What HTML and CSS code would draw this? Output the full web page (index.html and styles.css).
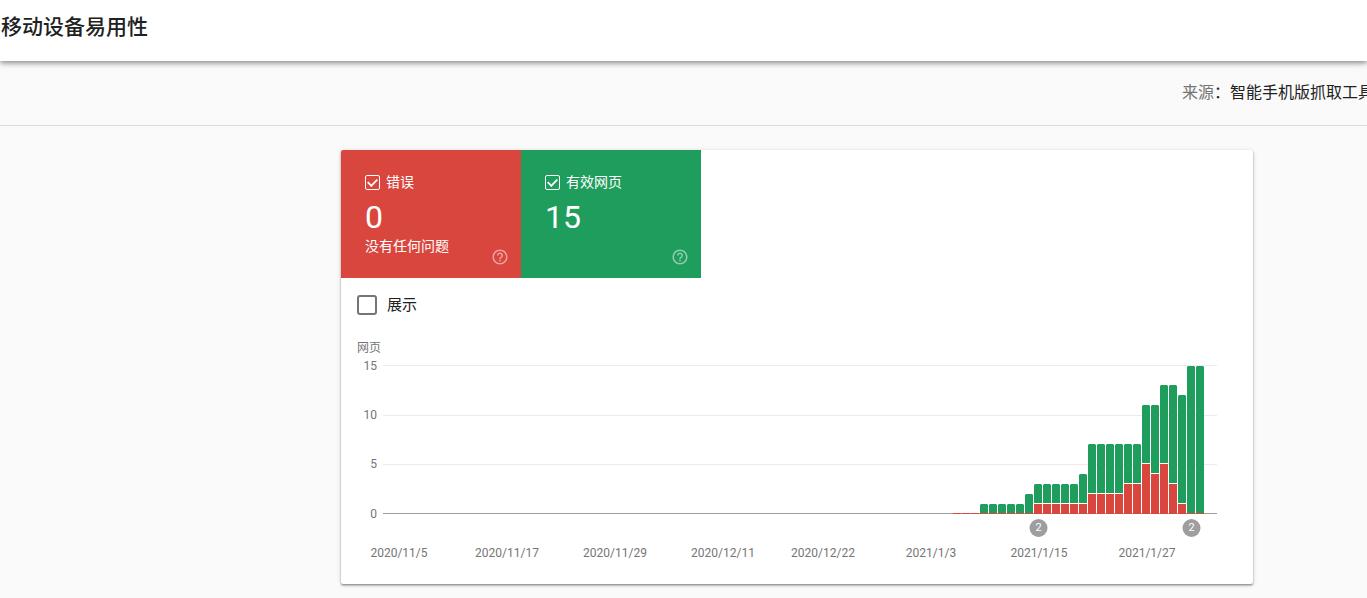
FILE: index.html
```html
<!DOCTYPE html>
<html lang="zh-CN">
<head>
<meta charset="utf-8">
<meta name="viewport" content="width=device-width, initial-scale=1">
<title>移动设备易用性</title>
<link rel="stylesheet" href="styles.css">
</head>
<body>
<header class="header">
  <h1 class="title">移动设备易用性</h1>
</header>
<div class="source-bar">
  <p class="source"><span class="source-label">来源</span>：智能手机版抓取工具</p>
</div>
<main class="content">
  <section class="card">
    <div class="tiles">
      <div class="tile tile-error">
        <label class="tile-label"><input class="tile-check" type="checkbox" checked>错误</label>
        <div class="tile-value">0</div>
        <div class="tile-note">没有任何问题</div>
        <button class="help" type="button" aria-label="帮助">
          <svg class="help-icon" viewBox="0 0 24 24" aria-hidden="true"><path d="M11 18h2v-2h-2v2zm1-16C6.480 2 2 6.480 2 12s4.480 10 10 10 10-4.480 10-10S17.520 2 12 2zm0 18c-4.410 0-8-3.590-8-8s3.590-8 8-8 8 3.590 8 8-3.590 8-8 8zm0-14c-2.210 0-4 1.790-4 4h2c0-1.100.9-2 2-2s2 .9 2 2c0 2-3 1.750-3 5h2c0-2.250 3-2.500 3-5 0-2.210-1.790-4-4-4z"/></svg>
        </button>
      </div>
      <div class="tile tile-valid">
        <label class="tile-label"><input class="tile-check" type="checkbox" checked>有效网页</label>
        <div class="tile-value">15</div>
        <button class="help" type="button" aria-label="帮助">
          <svg class="help-icon" viewBox="0 0 24 24" aria-hidden="true"><path d="M11 18h2v-2h-2v2zm1-16C6.480 2 2 6.480 2 12s4.480 10 10 10 10-4.480 10-10S17.520 2 12 2zm0 18c-4.410 0-8-3.590-8-8s3.590-8 8-8 8 3.590 8 8-3.590 8-8 8zm0-14c-2.210 0-4 1.790-4 4h2c0-1.100.9-2 2-2s2 .9 2 2c0 2-3 1.750-3 5h2c0-2.250 3-2.500 3-5 0-2.210-1.790-4-4-4z"/></svg>
        </button>
      </div>
    </div>
    <label class="impressions"><input class="impressions-check" type="checkbox">展示</label>
    <svg class="chart" viewBox="0 0 912 252" role="img" aria-label="网页">
      <path class="grid" d="M42 33h834v1h-834zM42 83h834v1h-834zM42 132h834v1h-834z"/>
      <path class="axis" d="M42 181h834v1h-834z"/>
      <!-- valid pages -->
      <path class="valid" d="M639 181v-8l1-1h6l1 1v8zM648 181v-8l1-1h6l1 1v8zM657 181v-8l1-1h6l1 1v8zM666 181v-8l1-1h6l1 1v8zM675 181v-8l1-1h6l1 1v8zM684 181v-18l1-1h6l1 1v18z
        M693 171v-18l1-1h6l1 1v18zM702 171v-18l1-1h6l1 1v18zM711 171v-18l1-1h6l1 1v18zM720 171v-18l1-1h6l1 1v18zM729 171v-18l1-1h6l1 1v18zM738 171v-28l1-1h6l1 1v28z
        M747 161v-48l1-1h6l1 1v48zM756 161v-48l1-1h6l1 1v48zM765 161v-48l1-1h6l1 1v48zM774 161v-48l1-1h6l1 1v48zM783 151v-38l1-1h6l1 1v38zM792 151v-38l1-1h6l1 1v38z
        M801 131v-57l1-1h6l1 1v57zM810 141v-67l1-1h6l1 1v67zM819 131v-77l1-1h6l1 1v77zM828 151v-97l1-1h6l1 1v97zM837 171v-107l1-1h6l1 1v107zM846 181v-146l1-1h6l1 1v146zM855 181v-146l1-1h6l1 1v146z"/>
      <!-- pages with errors -->
      <path class="error" d="M612 181h8v1h-8zM621 181h8v1h-8zM630 181h8v1h-8zM639 181h8v1h-8zM648 181h8v1h-8zM657 181h8v1h-8zM666 181h8v1h-8zM675 181h8v1h-8zM684 181h8v1h-8z
        M693 172h8v10h-8zM702 172h8v10h-8zM711 172h8v10h-8zM720 172h8v10h-8zM729 172h8v10h-8zM738 172h8v10h-8z
        M747 162h8v20h-8zM756 162h8v20h-8zM765 162h8v20h-8zM774 162h8v20h-8zM783 152h8v30h-8zM792 152h8v30h-8z
        M801 132h8v50h-8zM810 142h8v40h-8zM819 132h8v50h-8zM828 152h8v30h-8zM837 172h8v10h-8zM846 181h8v1h-8zM855 181h8v1h-8z"/>
      <!-- white separators between stacked values -->
      <path class="gap" d="M693 171h53v1h-53zM747 161h35v1h-35zM783 151h17v1h-17zM801 131h8v1h-8zM810 141h8v1h-8zM819 131h8v1h-8zM828 151h8v1h-8zM837 171h8v1h-8z"/>
      <text class="chart-text" x="16" y="20">网页</text>
      <g class="chart-text axis-y">
        <text x="36" y="38">15</text>
        <text x="36" y="87">10</text>
        <text x="36" y="136">5</text>
        <text x="36" y="186">0</text>
      </g>
      <g class="chart-text axis-x">
        <text x="58" y="225">2020/11/5</text>
        <text x="166" y="225">2020/11/17</text>
        <text x="274" y="225">2020/11/29</text>
        <text x="382" y="225">2020/12/11</text>
        <text x="482" y="225">2020/12/22</text>
        <text x="590" y="225">2021/1/3</text>
        <text x="698" y="225">2021/1/15</text>
        <text x="806" y="225">2021/1/27</text>
      </g>
      <g class="marker">
        <circle cx="697.5" cy="196" r="9"/>
        <circle cx="850.5" cy="196" r="9"/>
        <text x="697.5" y="199">2</text>
        <text x="850.5" y="199">2</text>
      </g>
    </svg>
  </section>
</main>
</body>
</html>
```

FILE: styles.css
```css
* {
  box-sizing: border-box;
}

body {
  margin: 0;
  overflow-x: hidden;
  background: #fafafa;
  color: #212121;
  font-family: Roboto, "Noto Sans CJK SC", sans-serif;
}

.header {
  position: relative;
  height: 61px;
  padding: 11px 0 0 1px;
  background: #fff;
  box-shadow: 0 2px 5px rgba(0, 0, 0, 0.4), 0 1px 10px rgba(0, 0, 0, 0.1);
}

.title {
  margin: 0;
  font-size: 21px;
  font-weight: 500;
  line-height: 32px;
}

.source-bar {
  display: flex;
  align-items: center;
  justify-content: flex-end;
  height: 65px;
  border-bottom: 1px solid #dcdcdc;
  overflow: hidden;
}

.source {
  margin: 0 -9px 0 0;
  padding-right: 2px;
  font-size: 16px;
  line-height: 24px;
  white-space: nowrap;
}

.source-label {
  color: #757575;
}

.content {
  padding: 24px 114px 14px 341px;
}

.card {
  overflow: hidden;
  border-radius: 2px;
  background: #fff;
  box-shadow: 0 2px 2px rgba(0, 0, 0, 0.14), 0 1px 2px rgba(0, 0, 0, 0.3), 0 1px 5px rgba(0, 0, 0, 0.12);
}

.tiles {
  display: flex;
}

.tile {
  position: relative;
  width: 180px;
  height: 128px;
  padding: 22px 24px 0;
  color: #fff;
  font-size: 14px;
}

.tile-error {
  background: #d9463e;
}

.tile-valid {
  background: #1f9d5c;
}

.tile-label {
  display: flex;
  align-items: center;
  gap: 6px;
  line-height: 20px;
}

.tile-check {
  display: grid;
  place-items: center;
  width: 15px;
  height: 15px;
  margin: 0;
  border: 1px solid #fff;
  border-radius: 2px;
  appearance: none;
}

.tile-check:checked::before {
  content: "";
  width: 9px;
  height: 5px;
  margin-bottom: 2px;
  border: solid #fff;
  border-width: 0 0 2px 2px;
  transform: rotate(-45deg) scale(0.85);
}

.tile-value {
  padding-top: 6px;
  font-size: 32px;
  line-height: 38px;
}

.tile-note {
  line-height: 20px;
}

.help {
  position: absolute;
  right: 12px;
  bottom: 12px;
  width: 18px;
  height: 18px;
  padding: 0;
  border: 0;
  background: none;
}

.help-icon {
  display: block;
  fill: #fff;
  opacity: 0.5;
}

.impressions {
  display: flex;
  align-items: center;
  gap: 10px;
  height: 54px;
  padding: 0 16px;
  font-size: 15px;
  line-height: 20px;
}

.impressions-check {
  width: 20px;
  height: 20px;
  margin: 0;
  border: 2px solid #757575;
  border-radius: 3px;
  appearance: none;
}

.chart {
  display: block;
  width: 100%;
}

.grid {
  fill: #ebebeb;
}

.axis {
  fill: #9e9e9e;
}

.valid {
  fill: #1f9d5c;
}

.error {
  fill: #d9463e;
}

.gap {
  fill: #fff;
}

.chart-text {
  fill: #757575;
  font-size: 12px;
}

.axis-y {
  text-anchor: end;
}

.axis-x {
  text-anchor: middle;
}

.marker {
  fill: #9e9e9e;
  font-size: 11px;
  text-anchor: middle;
}

.marker text {
  fill: #fff;
}
```
